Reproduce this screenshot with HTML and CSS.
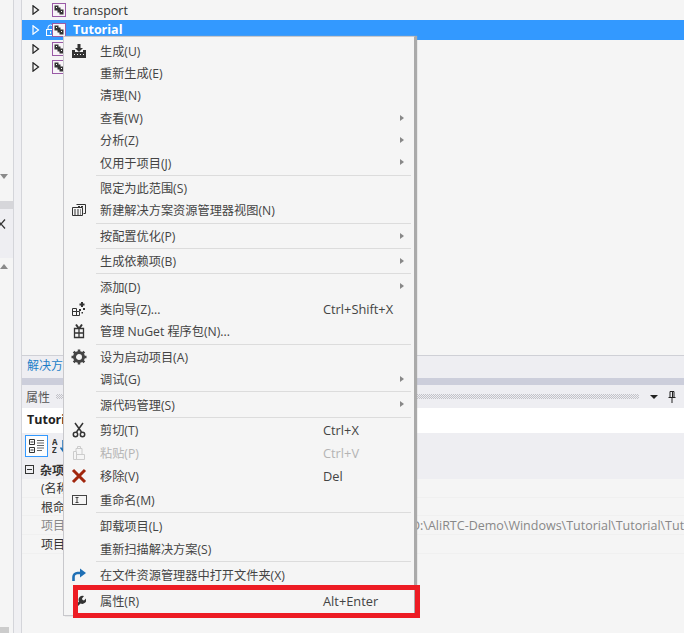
FILE: index.html
```html
<!DOCTYPE html>
<html lang="zh-CN">
<head>
    <meta charset="UTF-8">
    <title>解决方案资源管理器</title>
    <link rel="stylesheet" href="styles.css">
</head>
<body>
    <svg class="defs" width="0" height="0">
        <symbol id="proj" viewBox="0 0 14 14">
            <rect x="0.5" y="0.5" width="13" height="13" fill="#f8f4f8" stroke="#9a5aa6"/>
            <path d="M2.500 2.500h4v2h2v2h3v5h-4v-2h-2v-2h-3z" fill="#333"/>
            <path d="M4 4h1v1H4zM9 8h1v1H9z" fill="#fff"/>
        </symbol>
        <symbol id="expander" viewBox="0 0 8 10">
            <path d="M1 .8 6.500 5 1 9.200z" fill="none" stroke="currentColor" stroke-width="1.200"/>
        </symbol>
    </svg>

    <div class="ide">
        <!-- left strip -->
        <div class="strip">
            <div class="strip-top"><span class="tri-down"></span></div>
            <div class="strip-band"></div>
            <div class="strip-tab">
                <svg viewBox="0 0 6 10" width="6" height="10"><path d="M-3 .5 5 9.500M5 .5-3 9.500" stroke="#333" stroke-width="1.300"/></svg>
            </div>
            <div class="strip-low"><span class="tri-up"></span></div>
            <div class="strip-end"></div>
        </div>

        <div class="main">
            <!-- solution tree -->
            <div class="tree">
                <div class="tree-row">
                    <svg class="exp"><use href="#expander"/></svg>
                    <span class="lock"></span>
                    <svg class="proj"><use href="#proj"/></svg>
                    <span>transport</span>
                </div>
                <div class="tree-row selected">
                    <svg class="exp"><use href="#expander"/></svg>
                    <svg class="lock" viewBox="0 0 11 12"><path d="M3 5V3.500a2.500 2.500 0 0 1 5 0V5" fill="none" stroke="#fff"/><rect x="1.500" y="5.500" width="8" height="6" fill="none" stroke="#fff"/><path d="M5.500 7.500v2" stroke="#fff"/></svg>
                    <svg class="proj"><use href="#proj"/></svg>
                    <span>Tutorial</span>
                </div>
                <div class="tree-row">
                    <svg class="exp"><use href="#expander"/></svg>
                    <span class="lock"></span>
                    <svg class="proj"><use href="#proj"/></svg>
                </div>
                <div class="tree-row">
                    <svg class="exp"><use href="#expander"/></svg>
                    <span class="lock"></span>
                    <svg class="proj"><use href="#proj"/></svg>
                </div>
            </div>
            <div class="tab-bar"><a class="tab-link">解决方案资源管理器</a></div>
            <div class="splitter"></div>

            <!-- properties panel -->
            <div class="props-title">
                <span>属性</span>
                <span class="dots"></span>
                <span class="tri-small"></span>
                <svg class="pin" viewBox="0 0 8 12"><path d="M2 .5h4v6H2zM.5 6.500h7M4 6.500V12M4.500 1v5" fill="none" stroke="#222"/></svg>
            </div>
            <div class="props-object">Tutorial</div>
            <div class="props-toolbar">
                <button class="tool-btn">
                    <svg viewBox="0 0 16 14" width="16" height="14"><path d="M.5.5h5v5h-5zM.5 8.500h5v5h-5z" fill="none" stroke="#333"/><path d="M1.500 3h3M1.500 11h3" stroke="#333"/><path d="M8 1.500h7M8 4h7M8 6.500h7M8 9h7M8 11.500h5" stroke="#666"/></svg>
                </button>
                <svg class="az" viewBox="0 0 14 16"><text x="0" y="7" class="az-text">A</text><text x="0" y="15" class="az-text">Z</text><path d="M11 2v10M8.500 9.500 11 13l2.500-3.500" fill="none" stroke="#1e6fb5" stroke-width="1.500"/></svg>
            </div>
            <div class="props-grid">
                <div class="prop-group"><span class="box-minus"></span><b>杂项</b></div>
                <div class="prop-row"><span>(名称)</span><span></span></div>
                <div class="prop-row"><span>根命名空间</span><span></span></div>
                <div class="prop-row dim"><span>项目文件</span><span class="prop-val">D:\AliRTC-Demo\Windows\Tutorial\Tutorial\Tutorial.vcxproj</span></div>
                <div class="prop-row"><span>项目文件夹</span><span></span></div>
            </div>
        </div>
    </div>

    <!-- context menu -->
    <div class="menu">
        <div class="item"><span class="ico"><svg viewBox="0 0 16 16" width="16" height="16"><path d="M6.500 1h3v4H12L8 9 4 5h2.500z" fill="#333"/><path d="M1 7h3v2h8V7h3v8H1z" fill="#333"/><path d="M3 11h1v1H3zM6 11h1v1H6zM9 11h1v1H9zM12 11h1v1h-1z" fill="#f5f5f5"/></svg></span><span class="label">生成(U)</span></div>
        <div class="item"><span class="ico"></span><span class="label">重新生成(E)</span></div>
        <div class="item"><span class="ico"></span><span class="label">清理(N)</span></div>
        <div class="item sub"><span class="ico"></span><span class="label">查看(W)</span></div>
        <div class="item sub"><span class="ico"></span><span class="label">分析(Z)</span></div>
        <div class="item sub"><span class="ico"></span><span class="label">仅用于项目(J)</span></div>
        <div class="sep"></div>
        <div class="item"><span class="ico"></span><span class="label">限定为此范围(S)</span></div>
        <div class="item"><span class="ico"><svg viewBox="0 0 14 14" width="14" height="14"><path d="M4.500 1.500h9v9h-2M.5 4.500h10v8H.5z" fill="none" stroke="#333"/><path d="M2 7h7M2 9h7M2 11h7M6 3.500h6" stroke="#333" stroke-dasharray="2 1"/></svg></span><span class="label">新建解决方案资源管理器视图(N)</span></div>
        <div class="sep"></div>
        <div class="item sub"><span class="ico"></span><span class="label">按配置优化(P)</span></div>
        <div class="sep"></div>
        <div class="item sub"><span class="ico"></span><span class="label">生成依赖项(B)</span></div>
        <div class="sep"></div>
        <div class="item sub"><span class="ico"></span><span class="label">添加(D)</span></div>
        <div class="item"><span class="ico"><svg viewBox="0 0 16 16" width="16" height="16"><path d="M1.500 7.500h4v3h3v4h-7zM1.500 10.500h4v4" fill="none" stroke="#333"/><path d="M10 1h2v1.500h1.500v2H12V6h-2V4.500H8.500v-2H10z" fill="#333"/><path d="M8 8h2v2H8zM12 7h2v2h-2zM10.500 11h1.500v1.500h-1.500z" fill="#333"/></svg></span><span class="label">类向导(Z)...</span><span class="key">Ctrl+Shift+X</span></div>
        <div class="item"><span class="ico"><svg viewBox="0 0 14 16" width="14" height="16"><path d="M2.500 5.500h9v9h-9zM2.500 10h9M7 5.500v9" fill="none" stroke="#333" stroke-width="1.300"/><path d="M4 1.500 6.500 5M10 1.500 7.500 5" stroke="#333" stroke-width="2"/></svg></span><span class="label">管理 NuGet 程序包(N)...</span></div>
        <div class="sep"></div>
        <div class="item"><span class="ico"><svg viewBox="0 0 16 16" width="16" height="16"><circle cx="8" cy="8" r="4.500" fill="none" stroke="#444" stroke-width="3"/><path d="M8 .5v15M.5 8h15M2.700 2.700l10.600 10.600M13.300 2.700 2.700 13.300" stroke="#444" stroke-width="2.500" stroke-dasharray="3 9 3"/></svg></span><span class="label">设为启动项目(A)</span></div>
        <div class="item sub"><span class="ico"></span><span class="label">调试(G)</span></div>
        <div class="sep"></div>
        <div class="item sub"><span class="ico"></span><span class="label">源代码管理(S)</span></div>
        <div class="sep"></div>
        <div class="item tall"><span class="ico"><svg viewBox="0 0 14 16" width="14" height="16"><path d="M3 1 9.500 10M11 1 4.500 10" stroke="#333" stroke-width="1.500"/><circle cx="3.500" cy="12.500" r="2.200" fill="none" stroke="#333" stroke-width="1.500"/><circle cx="10.500" cy="12.500" r="2.200" fill="none" stroke="#333" stroke-width="1.500"/></svg></span><span class="label">剪切(T)</span><span class="key">Ctrl+X</span></div>
        <div class="item tall disabled"><span class="ico"><svg viewBox="0 0 14 16" width="14" height="16"><path d="M1.500 6.500h3v8h-3zM4.500 9.500h8v5h-8zM4 6V3.500h6V9M5.500 3.500v-2h3v2" fill="none" stroke="#ccc"/></svg></span><span class="label">粘贴(P)</span><span class="key">Ctrl+V</span></div>
        <div class="item tall"><span class="ico"><svg viewBox="0 0 16 16" width="16" height="16"><path d="M2 2l12 12M14 2 2 14" stroke="#a1260d" stroke-width="3"/></svg></span><span class="label">移除(V)</span><span class="key">Del</span></div>
        <div class="item tall"><span class="ico"><svg viewBox="0 0 15 10" width="15" height="10"><rect x="0.500" y="0.500" width="14" height="9" fill="none" stroke="#444"/><path d="M3.500 2.500h3M3.500 7.500h3M5 2.500v5" stroke="#444"/></svg></span><span class="label">重命名(M)</span></div>
        <div class="sep"></div>
        <div class="item tall"><span class="ico"></span><span class="label">卸载项目(L)</span></div>
        <div class="item tall"><span class="ico"></span><span class="label">重新扫描解决方案(S)</span></div>
        <div class="sep"></div>
        <div class="item tall"><span class="ico"><svg viewBox="0 0 16 14" width="16" height="14"><path d="M2.500 13V9a4 4 0 0 1 4-4H10" fill="none" stroke="#1e6fb5" stroke-width="2.600"/><path d="M9 .5 15 5 9 9.500z" fill="#1e6fb5"/></svg></span><span class="label">在文件资源管理器中打开文件夹(X)</span></div>
        <div class="sep"></div>
        <div class="item tall"><span class="ico"><svg viewBox="0 0 14 14" width="14" height="14"><path d="M1 14 7 7.500a4 4 0 0 1 5-5.500L10 4.500l.5 1.500 1.500.5L14 4.500a4 4 0 0 1-5.500 5L3 15z" fill="#333"/></svg></span><span class="label">属性(R)</span><span class="key">Alt+Enter</span></div>
    </div>

    <div class="callout"></div>
</body>
</html>
```
FILE: styles.css
```css
html, body {
    margin: 0;
    height: 100%;
    overflow: hidden;
}

body {
    background: #f5f5f5;
    color: #333;
    font-family: "Open Sans", "Noto Sans CJK SC", sans-serif;
    font-size: 12px;
}

.defs {
    position: absolute;
}

.ide {
    display: flex;
    height: 633px;
}

/* left strip */
.strip {
    width: 13px;
    display: flex;
    flex-direction: column;
    margin-right: 7px;
    border-right: 1px solid #d4d5da;
    box-shadow: 7px 0 0 #f0f0f3;
}

.strip-top {
    height: 201px;
    display: flex;
    align-items: flex-end;
}

.strip-top .tri-down {
    margin: 0 0 22px 0;
    border-left: 4px solid transparent;
    border-right: 4px solid transparent;
    border-top: 5px solid #8a8a8a;
}

.strip-band {
    height: 8px;
    background: #d6d6da;
}

.strip-tab {
    height: 49px;
    background: #eeeef2;
    padding-top: 7px;
    box-sizing: border-box;
}

.strip-low {
    flex: 1;
    padding-top: 6px;
}

.tri-up {
    display: block;
    width: 0;
    border-left: 4px solid transparent;
    border-right: 4px solid transparent;
    border-bottom: 5px solid #8a8a8a;
}

.strip-end {
    height: 6px;
    width: 9px;
    background: #ccc;
}

.main {
    flex: 1;
    min-width: 0;
    display: flex;
    flex-direction: column;
    border-left: 1px solid #d4d5da;
}

/* tree */
.tree {
    height: 356px;
    box-sizing: border-box;
    padding-top: 1px;
    border-bottom: 1px solid #cfd0d6;
}

.tree-row {
    display: flex;
    align-items: center;
    height: 18.500px;
    padding-left: 10px;
    color: #333;
    font-size: 12.500px;
}

.tree-row.selected {
    height: 20px;
    background: #3399ff;
    color: #fff;
    font-weight: 700;
}

.exp {
    width: 8px;
    height: 10px;
    color: #222;
    margin-right: 5px;
}

.selected .exp {
    color: #fff;
}

.lock {
    width: 11px;
    height: 12px;
    margin-right: -4px;
    flex: none;
}

.proj {
    width: 14px;
    height: 14px;
    margin-right: 7px;
}

.tab-bar {
    height: 22px;
    background: #eeeef2;
    padding-left: 5px;
    line-height: 20px;
}

.tab-link {
    color: #1e7ec8;
}

.splitter {
    height: 7px;
    background: #cccedb;
}

/* properties */
.props-title {
    display: flex;
    align-items: center;
    height: 23px;
    background: #eeeef2;
    padding: 0 8px 0 4px;
    color: #555;
}

.dots {
    flex: 1;
    height: 5px;
    margin: 0 11px 0 6px;
    background: repeating-conic-gradient(#c2c2c8 0 25%, transparent 0 50%) 0 0 / 2px 2px;
}

.tri-small {
    border-left: 4px solid transparent;
    border-right: 4px solid transparent;
    border-top: 4px solid #222;
    margin-right: 10px;
}

.pin {
    width: 8px;
    height: 12px;
}

.props-object {
    height: 25px;
    line-height: 24px;
    background: #fff;
    padding-left: 5px;
    font-weight: 700;
    font-size: 12.500px;
    color: #222;
}

.props-toolbar {
    display: flex;
    align-items: center;
    gap: 4px;
    height: 26px;
    background: #eeeef2;
    padding-left: 3px;
}

.tool-btn {
    width: 23px;
    height: 22px;
    padding: 0;
    border: 1px solid #3399ff;
    background: #fdfdfd;
    display: flex;
    align-items: center;
    justify-content: center;
}

.az {
    width: 14px;
    height: 16px;
}

.az-text {
    font-size: 8px;
    font-weight: 700;
    fill: #333;
}

.props-grid {
    background: #f5f5f5;
}

.prop-group {
    height: 20px;
    background: #eeeef2;
    display: flex;
    align-items: center;
    gap: 6px;
    padding-left: 3px;
    padding-top: 1px;
    box-sizing: border-box;
}

.box-minus {
    width: 7px;
    height: 7px;
    border: 1px solid #333;
    background: linear-gradient(#333, #333) center / 5px 1px no-repeat;
}

.prop-row {
    height: 18.700px;
    display: grid;
    grid-template-columns: 392px 1fr;
    align-items: center;
    padding-left: 19px;
    border-bottom: 1px solid #f0f0f0;
    box-sizing: border-box;
    white-space: nowrap;
    overflow: hidden;
}

.dim {
    color: #888;
}

.prop-val {
    margin-left: -22px;
    font-size: 12.500px;
}

/* context menu, lies over the panels */
.menu {
    position: absolute;
    left: 63px;
    top: 36px;
    width: 352px;
    box-sizing: border-box;
    padding: 2.500px 0 2px;
    background: #f5f5f5;
    border: 1px solid #c8c8cc;
    border-right: 1px solid #aaa;
    box-shadow: 2px 0 1px #aaa;
    color: #444;
}

.item {
    display: flex;
    align-items: center;
    height: 22.400px;
    position: relative;
    white-space: nowrap;
}

.item.tall {
    height: 23.100px;
}

.ico {
    width: 30px;
    flex: none;
    display: flex;
    justify-content: center;
}

.label {
    margin-left: 6px;
    width: 223px;
    flex: none;
    font-size: 12.200px;
}

.key {
    color: #444;
    font-size: 12.800px;
}

.disabled .label,
.disabled .key {
    color: #b4b4b4;
}

.sub::after {
    content: "";
    position: absolute;
    left: 336px;
    top: 8px;
    border-left: 4px solid #888;
    border-top: 3.500px solid transparent;
    border-bottom: 3.500px solid transparent;
}

.sep {
    height: 1px;
    margin: 1px 3px 1px 32px;
    background: #dcdcdc;
}

/* red annotation box */
.callout {
    position: absolute;
    left: 73px;
    top: 585px;
    width: 337px;
    height: 23px;
    border: 5px solid #ed1c24;
}
```
